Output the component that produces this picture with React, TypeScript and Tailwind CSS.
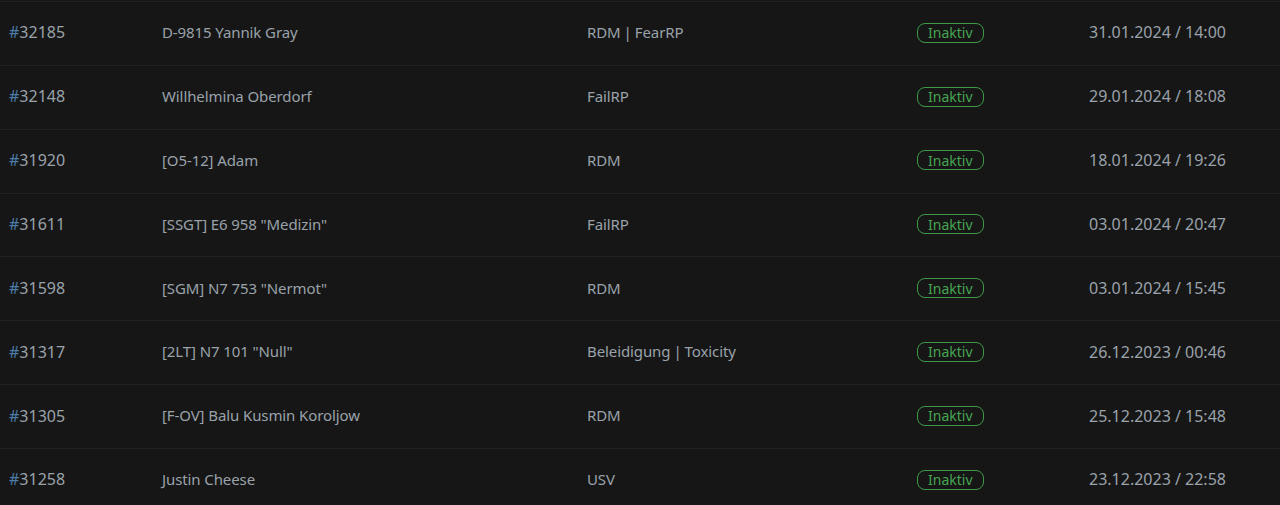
const rows = [
  { id: "32185", name: "D-9815 Yannik Gray", reason: "RDM | FearRP", date: "31.01.2024 / 14:00" },
  { id: "32148", name: "Willhelmina Oberdorf", reason: "FailRP", date: "29.01.2024 / 18:08" },
  { id: "31920", name: "[O5-12] Adam", reason: "RDM", date: "18.01.2024 / 19:26" },
  { id: "31611", name: '[SSGT] E6 958 "Medizin"', reason: "FailRP", date: "03.01.2024 / 20:47" },
  { id: "31598", name: '[SGM] N7 753 "Nermot"', reason: "RDM", date: "03.01.2024 / 15:45" },
  { id: "31317", name: '[2LT] N7 101 "Null"', reason: "Beleidigung | Toxicity", date: "26.12.2023 / 00:46" },
  { id: "31305", name: "[F-OV] Balu Kusmin Koroljow", reason: "RDM", date: "25.12.2023 / 15:48" },
  { id: "31258", name: "Justin Cheese", reason: "USV", date: "23.12.2023 / 22:58" },
];

export default function App() {
  return (
    <div
      className="w-screen h-[505px] overflow-hidden bg-[#161616] pt-px text-[15px] text-[#9aa2aa]"
      style={{ fontFamily: '"Noto Sans", "Open Sans", sans-serif' }}
    >
      {rows.map((r) => (
        <div key={r.id} className="flex h-[63.86px] items-center border-t border-[#212121] pb-[2px]">
          <div className="w-[162px] pl-[9px] text-[16px]">
            <span className="text-[#4a7ba6]">#</span>
            {r.id}
          </div>
          <div className="w-[425px] tracking-[-0.1px]">{r.name}</div>
          <div className="w-[330px] tracking-[-0.1px]">
            {r.reason.split(" | ").map((part, i) => (
              <span key={i}>
                {i > 0 && <span className="mx-[3px]">|</span>}
                {part}
              </span>
            ))}
          </div>
          <div className="w-[172px]">
            <span className="inline-flex h-5 items-center rounded-lg border border-[#3c9a47] px-[10px] text-[14px] text-[#46a552]">
              Inaktiv
            </span>
          </div>
          <div className="text-[16px]">{r.date}</div>
        </div>
      ))}
    </div>
  );
}
